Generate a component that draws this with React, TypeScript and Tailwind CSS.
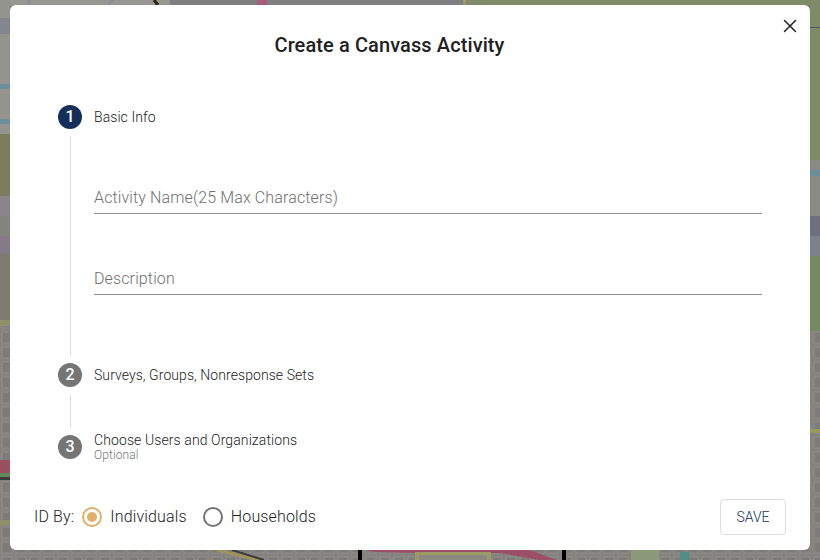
import { X } from "lucide-react";

const font = "font-['Roboto',sans-serif]";

function MapBackdrop() {
  return (
    <svg className="absolute inset-0" width="820" height="560" viewBox="0 0 820 560">
      <defs>
        <pattern id="blocks" width="14" height="15" patternUnits="userSpaceOnUse">
          <rect width="14" height="15" fill="#84837f" />
          <rect x="2" y="2" width="10" height="11" fill="#7d7c79" stroke="#8e8d89" strokeWidth="1" />
        </pattern>
      </defs>
      <rect width="820" height="560" fill="#80807c" />
      {/* top edge */}
      <rect x="0" y="0" width="170" height="6" fill="#979792" />
      <rect x="170" y="0" width="87" height="6" fill="#7e7e7e" />
      <rect x="257" y="0" width="10" height="6" fill="#a85c78" />
      <rect x="267" y="0" width="196" height="6" fill="#7f7f7f" />
      <rect x="463" y="0" width="3" height="6" fill="#9a9a62" />
      <rect x="466" y="0" width="354" height="6" fill="#7f8a68" />
      <path d="M28 0 L30 5 M108 5 L113 0" stroke="#8a8a9a" strokeWidth="2" />
      <path d="M154 0 L158 5" stroke="#2b2210" strokeWidth="3" />
      {/* left edge */}
      <rect x="0" y="0" width="10" height="134" fill="#94948f" />
      <rect x="0" y="18" width="10" height="16" fill="#85858f" />
      <rect x="0" y="84" width="10" height="5" fill="#6b8f9a" />
      <rect x="0" y="119" width="10" height="5" fill="#6b8f9a" />
      <rect x="0" y="134" width="10" height="62" fill="#7c7c5e" />
      <rect x="0" y="196" width="10" height="20" fill="#8b858a" />
      <rect x="0" y="216" width="10" height="20" fill="#84847e" />
      <rect x="0" y="236" width="10" height="18" fill="#847a88" />
      <rect x="0" y="254" width="10" height="66" fill="#7e7a70" />
      <rect x="0" y="320" width="10" height="6" fill="#8f8f6a" />
      <rect x="0" y="326" width="10" height="134" fill="url(#blocks)" />
      <rect x="0" y="460" width="10" height="13" fill="#98505f" />
      <rect x="0" y="473" width="10" height="4" fill="#5f8a5c" />
      <rect x="0" y="477" width="10" height="3" fill="#3c3c3c" />
      <rect x="0" y="480" width="10" height="40" fill="url(#blocks)" />
      <rect x="0" y="520" width="10" height="6" fill="#8f8f6a" />
      <rect x="0" y="526" width="10" height="34" fill="url(#blocks)" />
      {/* right edge */}
      <rect x="810" y="0" width="10" height="160" fill="#7f8a68" />
      <rect x="810" y="27" width="10" height="1" fill="#555" />
      <rect x="810" y="160" width="10" height="56" fill="#8a8a85" />
      <rect x="810" y="170" width="10" height="6" fill="#6b8f9a" />
      <rect x="810" y="216" width="10" height="20" fill="#6f6f80" />
      <rect x="810" y="236" width="10" height="20" fill="#80808a" />
      <rect x="810" y="256" width="10" height="75" fill="#748a60" />
      <rect x="810" y="331" width="10" height="229" fill="url(#blocks)" />
      <rect x="810" y="429" width="10" height="4" fill="#98985f" />
      {/* bottom edge */}
      <rect x="0" y="550" width="820" height="10" fill="url(#blocks)" />
      <path d="M217 550 L258 560" stroke="#a0925c" strokeWidth="3" />
      <path d="M232 550 L264 560" stroke="#3c3c3c" strokeWidth="2" />
      <rect x="358" y="550" width="4" height="10" fill="#000" />
      <rect x="562" y="550" width="4" height="10" fill="#000" />
      <path d="M366 550 H530 L556 560 H540 L500 553 H420 L375 552 Z" fill="#9c4f66" />
      <rect x="415" y="552" width="76" height="8" fill="#9a9a62" />
      <rect x="419" y="555" width="68" height="5" fill="#8a8880" />
      <rect x="631" y="550" width="28" height="10" fill="#8a9a78" />
      <rect x="680" y="552" width="9" height="8" fill="#4f8f82" />
    </svg>
  );
}

function StepCircle({ n, active }: { n: number; active?: boolean }) {
  return (
    <div
      className={`w-6 h-6 rounded-full flex items-center justify-center text-white text-base font-medium shrink-0 ${
        active ? "bg-[#14305a]" : "bg-[#757575]"
      }`}
    >
      {n}
    </div>
  );
}

function Field({ label }: { label: string }) {
  return (
    <div className="h-[26px] border-b border-[#8c8c8c] text-base leading-[19px] tracking-[0.125px] font-light text-[#6f6f6f]">
      {label}
    </div>
  );
}

export default function App() {
  return (
    <div className={`relative w-[820px] h-[560px] overflow-hidden ${font}`}>
      <MapBackdrop />
      <div className="absolute left-[10px] top-[5px] w-[800px] h-[545px] bg-white rounded-md flex flex-col">
        <button className="absolute right-[11px] top-[12px] text-[#212121]" aria-label="Close">
          <X size={18} strokeWidth={1.6} className="scale-[1.22]" />
        </button>

        <h2 className="pt-[28px] pr-[41px] h-[100px] text-center text-xl leading-6 tracking-[0.1px] font-medium text-[#212121]">
          Create a Canvass Activity
        </h2>

        <div className="px-[48px]">
          <div className="flex items-center gap-3">
            <StepCircle n={1} active />
            <span className="text-sm tracking-[0.07px] font-light text-[#222]">Basic Info</span>
          </div>
          <div className="ml-3 mt-[7px] h-[219px] border-l border-[#d9d9d9] pl-[23px] pt-[52px] flex flex-col gap-[55px]">
            <Field label="Activity Name(25 Max Characters)" />
            <Field label="Description" />
          </div>
          <div className="mt-2 flex items-center gap-3">
            <StepCircle n={2} />
            <span className="text-sm tracking-[0.07px] font-light text-[#222]">Surveys, Groups, Nonresponse Sets</span>
          </div>
          <div className="ml-3 mt-2 h-8 border-l border-[#d9d9d9]" />
          <div className="mt-2 h-6 flex items-center gap-3">
            <StepCircle n={3} />
            <div className="flex flex-col">
              <span className="text-sm leading-[15px] tracking-[0.1px] font-light text-[#222]">Choose Users and Organizations</span>
              <span className="text-xs leading-[14px] tracking-[0.1px] font-light text-[#777]">Optional</span>
            </div>
          </div>
        </div>

        <div className="mt-[40px] px-[24px] flex items-center">
          <span className="text-base tracking-[0.15px] font-light text-[#222]">ID By:</span>
          <span className="ml-2 w-5 h-5 rounded-full border-2 border-[#e3ae69] flex items-center justify-center">
            <span className="w-[10px] h-[10px] rounded-full bg-[#e3ae69]" />
          </span>
          <span className="ml-2 text-base tracking-[0.15px] font-light text-[#222]">Individuals</span>
          <span className="ml-4 w-5 h-5 rounded-full border-2 border-[#757575]" />
          <span className="ml-2 text-base tracking-[0.15px] font-light text-[#222]">Households</span>
          <button className="ml-auto w-[66px] h-9 rounded border border-[#dcdcdc] text-sm font-light text-[#14305a]">
            SAVE
          </button>
        </div>
      </div>
    </div>
  );
}
